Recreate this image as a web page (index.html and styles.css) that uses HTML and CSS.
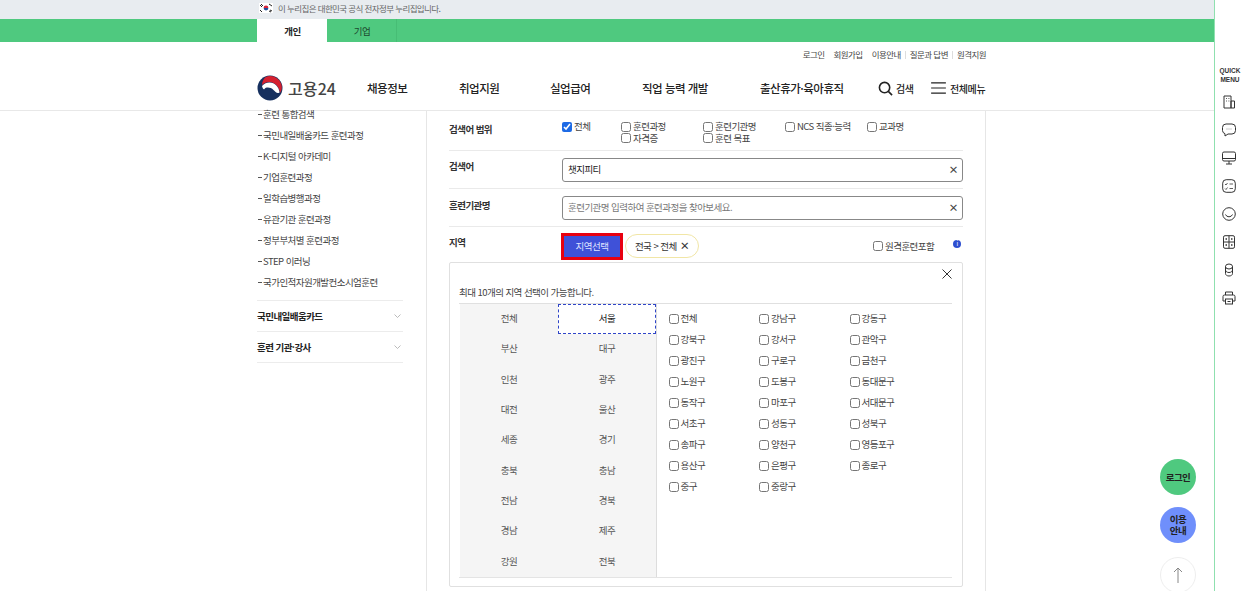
FILE: index.html
```html
<!DOCTYPE html>
<html lang="ko">
<head>
<meta charset="utf-8">
<title>고용24</title>
<link rel="stylesheet" href="styles.css">
</head>
<body>
<div class="shell">
  <div class="page">
    <div class="gov-bar">
      <div class="wrap gov-inner">
        <svg class="flag" width="14" height="10" viewBox="0 0 14 10"><rect width="14" height="10" fill="#fff"/><path d="M4.600 5a2.400 2.400 0 0 1 4.800 0z" fill="#d8263c"/><path d="M4.600 5a2.400 2.400 0 0 0 4.800 0z" fill="#1f4e9c"/><g stroke="#222" stroke-width="1"><path d="M1 3l2-2M2 4l2-2M10 1l3 2M10 8l2 1M11 7l2 1M1 7l2 2"/></g></svg>
        <span>이 누리집은 대한민국 공식 전자정부 누리집입니다.</span>
      </div>
    </div>
    <div class="tab-bar">
      <div class="wrap tabs">
        <a class="tab tab-on">개인</a>
        <a class="tab">기업</a>
      </div>
    </div>
    <header class="header">
      <div class="wrap">
        <nav class="util">
          <a>로그인</a><a>회원가입</a><a>이용안내</a><a class="sep">질문과 답변</a><a class="sep">원격지원</a>
        </nav>
        <div class="gnb">
          <div class="logo">
            <svg width="26" height="26" viewBox="0 0 26 26"><circle cx="13" cy="13" r="12.500" fill="#16305f"/><path d="M8 2.500A11.500 11.500 0 0 1 24.500 15L23 18C22.500 12 18 7 12.500 7 9.500 7 7 8 5 10 5 7 6.500 4 8 2.500z" fill="#d5202f"/><path d="M5 11C7 8.500 10 7.500 12.500 7.500 18 7.500 22 12 22.500 17.500 20 19 18.500 17 16.500 15 13.500 12 9 12 7.500 14 6.500 15 5.500 13 5 11z" fill="#fff"/></svg>
            <span>고용24</span>
          </div>
          <a class="gnb-item g1">채용정보</a>
          <a class="gnb-item g2">취업지원</a>
          <a class="gnb-item g3">실업급여</a>
          <a class="gnb-item g4">직업 능력 개발</a>
          <a class="gnb-item g5">출산휴가·육아휴직</a>
          <a class="gnb-tool t1"><svg width="15" height="15" viewBox="0 0 16 16" fill="none" stroke="#222" stroke-width="1.700"><circle cx="7" cy="7" r="5.500"/><path d="M11 11l4 4"/></svg>검색</a>
          <a class="gnb-tool t2"><svg width="15" height="12" viewBox="0 0 16 13" stroke="#222" stroke-width="1.300"><path d="M0 1h16M0 6.500h16M0 12h16"/></svg>전체메뉴</a>
        </div>
      </div>
    </header>
    <main class="wrap body">
      <aside class="side">
        <ul class="side-list">
          <li>훈련 통합검색</li>
          <li>국민내일배움카드 훈련과정</li>
          <li>K-디지털 아카데미</li>
          <li>기업훈련과정</li>
          <li>일학습병행과정</li>
          <li>유관기관 훈련과정</li>
          <li>정부부처별 훈련과정</li>
          <li>STEP 이러닝</li>
          <li>국가인적자원개발컨소시엄훈련</li>
        </ul>
        <div class="side-head">국민내일배움카드<svg width="7" height="4" viewBox="0 0 7 4" fill="none" stroke="#aaa" stroke-width=".8"><path d="M.5.500l3 3 3-3"/></svg></div>
        <div class="side-head">훈련 기관·강사<svg width="7" height="4" viewBox="0 0 7 4" fill="none" stroke="#aaa" stroke-width=".8"><path d="M.5.500l3 3 3-3"/></svg></div>
      </aside>
      <section class="content">
        <div class="row row-scope">
          <div class="label">검색어 범위</div>
          <div class="scope">
            <label class="chk c-first"><input type="checkbox" checked>전체</label>
            <label class="chk"><input type="checkbox">훈련과정</label>
            <label class="chk"><input type="checkbox">훈련기관명</label>
            <label class="chk"><input type="checkbox">NCS 직종·능력</label>
            <label class="chk"><input type="checkbox">교과명</label>
            <span></span>
            <label class="chk"><input type="checkbox">자격증</label>
            <label class="chk"><input type="checkbox">훈련 목표</label>
          </div>
        </div>
        <div class="row row-field">
          <div class="label">검색어</div>
          <div class="field"><span class="val">챗지피티</span><span class="clear">×</span></div>
        </div>
        <div class="row row-field">
          <div class="label label-low">훈련기관명</div>
          <div class="field"><span class="ph">훈련기관명 입력하여 훈련과정을 찾아보세요.</span><span class="clear">×</span></div>
        </div>
        <div class="row-region">
          <div class="label">지역</div>
          <button class="pick">지역선택</button>
          <span class="chip">전국 &gt; 전체 <b>×</b></span>
          <label class="chk remote"><input type="checkbox">원격훈련포함</label>
          <span class="info">i</span>
        </div>
        <div class="panel">
          <svg class="panel-x" width="10" height="10" viewBox="0 0 10 10" stroke="#333" stroke-width="1"><path d="M.5.500l9 9M9.500.500l-9 9"/></svg>
          <p class="panel-note">최대 10개의 지역 선택이 가능합니다.</p>
          <div class="picker">
            <div class="cities">
              <a>전체</a><a class="city-on">서울</a>
              <a>부산</a><a>대구</a>
              <a>인천</a><a>광주</a>
              <a>대전</a><a>울산</a>
              <a>세종</a><a>경기</a>
              <a>충북</a><a>충남</a>
              <a>전남</a><a>경북</a>
              <a>경남</a><a>제주</a>
              <a>강원</a><a>전북</a>
            </div>
            <div class="districts">
              <label class="chk"><input type="checkbox">전체</label><label class="chk"><input type="checkbox">강남구</label><label class="chk"><input type="checkbox">강동구</label>
              <label class="chk"><input type="checkbox">강북구</label><label class="chk"><input type="checkbox">강서구</label><label class="chk"><input type="checkbox">관악구</label>
              <label class="chk"><input type="checkbox">광진구</label><label class="chk"><input type="checkbox">구로구</label><label class="chk"><input type="checkbox">금천구</label>
              <label class="chk"><input type="checkbox">노원구</label><label class="chk"><input type="checkbox">도봉구</label><label class="chk"><input type="checkbox">동대문구</label>
              <label class="chk"><input type="checkbox">동작구</label><label class="chk"><input type="checkbox">마포구</label><label class="chk"><input type="checkbox">서대문구</label>
              <label class="chk"><input type="checkbox">서초구</label><label class="chk"><input type="checkbox">성동구</label><label class="chk"><input type="checkbox">성북구</label>
              <label class="chk"><input type="checkbox">송파구</label><label class="chk"><input type="checkbox">양천구</label><label class="chk"><input type="checkbox">영등포구</label>
              <label class="chk"><input type="checkbox">용산구</label><label class="chk"><input type="checkbox">은평구</label><label class="chk"><input type="checkbox">종로구</label>
              <label class="chk"><input type="checkbox">중구</label><label class="chk"><input type="checkbox">중랑구</label>
            </div>
          </div>
        </div>
      </section>
    </main>
    <a class="float f-login">로그인</a>
    <a class="float f-guide">이용<br>안내</a>
    <a class="float f-top"><svg width="10" height="16" viewBox="0 0 10 16" fill="none" stroke="#888" stroke-width="1"><path d="M5 16V1M1 5l4-4 4 4"/></svg></a>
  </div>
  <aside class="quick">
    <div class="quick-title">QUICK<br>MENU</div>
    <svg class="qi" width="14" height="14" viewBox="0 0 14 14" fill="none" stroke="#333"><path d="M2 1h7v12H2zM9 6h3.500v7H9zM4 3.500h.8M6.500 3.500h.8M4 6h.8M6.500 6h.8"/></svg>
    <svg class="qi" width="14" height="14" viewBox="0 0 14 14" fill="none" stroke="#333"><path d="M4 1h6a3.500 3.500 0 0 1 3.500 3.500v3A3.500 3.500 0 0 1 10 11H6l-3 2v-2.300A3.500 3.500 0 0 1 .5 7.500v-3A3.500 3.500 0 0 1 4 1z"/><path d="M4.500 6h5" stroke-dasharray="1 1" stroke="#999"/></svg>
    <svg class="qi" width="14" height="14" viewBox="0 0 14 14" fill="none" stroke="#333"><rect x=".5" y="1" width="13" height="9" rx="1.500"/><path d="M.5 7.500h13M7 10v3M4 13h6"/></svg>
    <svg class="qi" width="14" height="14" viewBox="0 0 14 14" fill="none" stroke="#333"><rect x=".7" y=".7" width="12.600" height="12.600" rx="3.500"/><path d="M3 5l1 1 1.500-2M7.500 5H11M3 9.500l1 1 1.500-2M7.500 9.500H11" stroke-width=".8"/></svg>
    <svg class="qi" width="14" height="14" viewBox="0 0 14 14" fill="none" stroke="#333"><circle cx="7" cy="7" r="6.300"/><path d="M3.500 7.500a3.800 3.800 0 0 0 7 0"/></svg>
    <svg class="qi" width="14" height="14" viewBox="0 0 14 14" fill="none" stroke="#333"><rect x="1.500" y=".7" width="11" height="12.600" rx="1.500"/><path d="M1.500 7h11M7 .7v12.600"/><path d="M3.500 4h1.500M9 4h1.500M3.500 10h1.500M9 10h1.500" stroke-width="1.500"/></svg>
    <svg class="qi" width="14" height="14" viewBox="0 0 14 14" fill="none" stroke="#333"><ellipse cx="7" cy="3.500" rx="3.500" ry="2.500"/><path d="M3.500 3.500v7c0 1.500 1.500 2.500 3.500 2.500s3.500-1 3.500-2.500v-7M3.500 7c0 1.500 1.500 2.500 3.500 2.500s3.500-1 3.500-2.500"/></svg>
    <svg class="qi" width="14" height="14" viewBox="0 0 14 14" fill="none" stroke="#333"><path d="M3.500 4V1h7v3M3.500 10H1V5.500A1.500 1.500 0 0 1 2.500 4h9A1.500 1.500 0 0 1 13 5.500V10h-2.500"/><rect x="3.500" y="8" width="7" height="5"/><path d="M5.500 10.500h3"/></svg>
  </aside>
</div>
</body>
</html>
```
FILE: styles.css
```css
* { box-sizing: border-box; }
html, body { margin: 0; height: 591px; overflow: hidden; background: #fff; }
body { font-family: "Noto Sans CJK KR", "Noto Sans", sans-serif; color: #333; font-size: 9.500px; letter-spacing: -0.55px; }
a { color: inherit; text-decoration: none; }
ul { margin: 0; padding: 0; list-style: none; }
p { margin: 0; }
input[type="checkbox"] { width: 10px; height: 10px; margin: 0 2px 0 0; flex: none; accent-color: #1d6ae5; }

.shell { display: flex; height: 591px; }
.page { position: relative; width: 1214px; flex: none; overflow: hidden; }
.wrap { width: 729px; margin-left: 257px; }

.gov-bar { height: 19px; background: #e8ecf0; color: #666; font-size: 8.500px; letter-spacing: -.6px; }
.gov-inner { display: flex; align-items: center; height: 16px; padding-left: 2px; gap: 5px; }
.flag { flex: none; }

.tab-bar { height: 23px; background: #4fc97f; }
.tabs { display: flex; height: 23px; }
.tab { width: 70px; padding-left: 1px; display: flex; align-items: center; justify-content: center; color: #1d4a2f; border-right: 1px solid #47bd75; }
.tab-on { background: #fff; color: #222; font-weight: 700; border-right: 0; }

.header { height: 69px; border-bottom: 1px solid #e8e8e8; }
.util { display: flex; justify-content: flex-end; gap: 9px; height: 23px; align-items: center; font-size: 8.500px; color: #444; letter-spacing: -.55px; }
.util .sep { position: relative; }
.util .sep::before { content: ""; position: absolute; left: -5px; top: 3px; height: 8px; border-left: 1px solid #ddd; }
.gnb { display: flex; align-items: center; height: 45px; padding-top: 1px; }
.logo { display: flex; align-items: center; gap: 5px; width: 110px; flex: none; font-size: 16px; font-weight: 500; color: #444; letter-spacing: .1px; }
.gnb-item { font-size: 11.500px; font-weight: 500; color: #222; flex: none; white-space: nowrap; letter-spacing: -.5px; }
.g1 { width: 92px; }
.g2 { width: 91px; }
.g3 { width: 92px; }
.g4 { width: 118px; }
.g5 { width: 118px; }
.gnb-tool { display: flex; align-items: center; gap: 3px; font-size: 10px; font-weight: 500; color: #222; flex: none; white-space: nowrap; letter-spacing: -.4px; }
.t1 { width: 53px; }
.t2 { gap: 4px; }

.body { display: flex; height: 480px; }
.side { width: 169px; flex: none; }
.side-list { margin-top: -7.500px; margin-bottom: 6.500px; width: 146px; }
.side-list li { height: 21.100px; line-height: 21px; color: #444; padding-left: 6px; position: relative; white-space: nowrap; }
.side-list li::before { content: ""; position: absolute; left: 1px; top: 10px; width: 4px; height: 1px; background: #555; }
.side-head { width: 146px; height: 31px; border-top: 1px solid #ececec; display: flex; justify-content: space-between; align-items: center; padding-right: 2px; font-weight: 700; color: #222; }
.side-head:last-child { height: 32px; border-bottom: 1px solid #ececec; }

.content { width: 560px; height: 480px; border-left: 1px solid #e6e6e6; border-right: 1px solid #e6e6e6; padding: 0 22px; flex: none; }
.row { display: flex; border-bottom: 1px solid #eaeaea; }
.label { width: 113px; flex: none; font-weight: 700; color: #333; }
.row-scope { height: 40px; padding-top: 10px; }
.row-scope .label { padding-top: 1px; }
.scope { display: grid; grid-template-columns: 59px repeat(4, 82px); grid-auto-rows: 11.500px; }
.chk { display: flex; align-items: center; white-space: nowrap; color: #444; line-height: 11px; }
.row-field { height: 38px; padding-top: 7px; }
.row-field .label { line-height: 16px; }
.row-field .label-low { padding-top: 1px; }
.field { flex: 1; height: 24px; border: 1px solid #888; border-radius: 3px; display: flex; align-items: center; justify-content: space-between; padding: 0 4px 0 5px; }
.val { color: #222; margin-top: -2px; }
.ph { color: #777; margin-top: -2px; }
.clear { font-size: 10px; font-weight: 700; color: #444; line-height: 1; margin-top: -1px; }

.row-region { display: flex; height: 35px; padding-top: 6px; }
.row-region .label { line-height: 18px; }
.pick { width: 62px; height: 27px; border: 3px solid #e8000f; background: #3f51d8; color: #dfe3ff; font: inherit; letter-spacing: inherit; padding: 0 0 1px; margin-left: -1px; flex: none; }
.chip { height: 24px; width: 74px; margin-left: 2px; margin-top: 1px; border: 1px solid #f1e6a6; border-radius: 12px; display: flex; align-items: center; justify-content: center; gap: 3px; color: #333; flex: none; padding-bottom: 1px; }
.chip b { font-size: 10px; }
.remote { margin-left: 174px; height: 24px; margin-top: 1px; }
.info { width: 8px; height: 8px; border-radius: 50%; background: #2d4fd0; color: #fff; font-size: 6px; line-height: 8px; text-align: center; margin-left: 19px; margin-top: 7px; flex: none; }

.panel { position: relative; height: 325px; border: 1px solid #e0e0e0; border-radius: 2px; padding: 0 10px 0 9px; }
.panel-x { position: absolute; top: 6px; right: 10px; }
.panel-note { padding-top: 20px; height: 41px; line-height: 18px; color: #444; border-bottom: 1px solid #e0e0e0; }
.picker { display: flex; height: 274px; border-bottom: 1px solid #e4e4e4; }
.cities { width: 197px; flex: none; margin-left: 1px; background: #f5f5f5; display: grid; grid-template-columns: 98px 98px; grid-auto-rows: 30.300px; border-right: 1px solid #ddd; }
.cities a { display: flex; align-items: center; justify-content: center; color: #555; padding-bottom: 2px; }
.cities .city-on { background: #fff; color: #222; outline: 1px dashed #2f45c8; outline-offset: -1px; }
.districts { flex: 1; display: grid; grid-template-columns: 90.500px 90.500px 90.500px; grid-auto-rows: 21px; padding: 4px 0 0 11.500px; align-content: start; }

.float { position: absolute; left: 1160px; width: 36px; height: 36px; border-radius: 50%; display: flex; align-items: center; justify-content: center; text-align: center; font-weight: 700; color: #222; line-height: 11px; }
.f-login { top: 459px; background: #4fc97f; }
.f-guide { top: 507px; background: #6f8ffb; }
.f-top { top: 557px; background: #fff; border: 1px solid #eee; }

.quick { width: 30px; flex: none; border-left: 1px solid #8fe0af; display: flex; flex-direction: column; align-items: center; padding-top: 67px; }
.quick-title { font-family: "Liberation Sans", sans-serif; font-size: 6.500px; font-weight: 700; line-height: 8.500px; color: #333; text-align: center; letter-spacing: 0; margin-bottom: 11px; margin-left: 1px; }
.qi { margin-bottom: 14px; flex: none; margin-left: -1px; }
```
